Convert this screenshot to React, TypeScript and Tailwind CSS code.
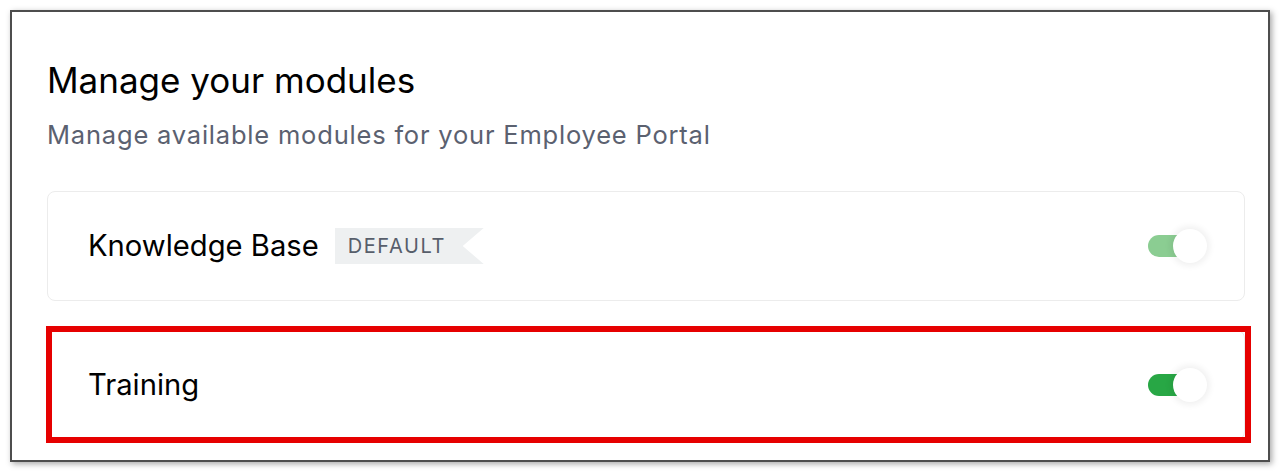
import React from "react";

function Toggle({ color }: { color: string }) {
  return (
    <div className="relative w-[62px] h-[34px] shrink-0">
      <div className={`absolute left-[3px] top-[6px] w-[43px] h-[22px] rounded-full ${color}`} />
      <div className="absolute right-0 top-0 w-[34px] h-[34px] rounded-full bg-white shadow-[0_0_6px_3px_rgba(0,0,0,0.06)]" />
    </div>
  );
}

export default function App() {
  return (
    <div className="w-[1280px] h-[472px] bg-white pt-[10px] pl-[10px]" style={{ fontFamily: "Inter, 'Noto Sans', sans-serif" }}>
      <div className="w-[1260px] h-[452px] bg-white border-2 border-[#4d4d4d] shadow-[2px_2px_6px_rgba(0,0,0,0.35)] pl-[35px] pt-[47px]">
        <h1 className="text-[35px] leading-[42px] text-black font-normal">Manage your modules</h1>
        <p className="mt-[19px] text-[25.5px] leading-[30px] text-[#5b6170] tracking-[0.8px]">Manage available modules for your Employee Portal</p>
        <div className="mt-[41px] w-[1198px] h-[110px] rounded-lg border border-[#ececec] flex items-center pl-[40px] pr-[37px]">
          <span className="text-[29.2px] text-black">Knowledge Base</span>
          <div className="ml-[16px] h-[36px] w-[149px] bg-[#eef0f1] flex items-center pl-[13px] [clip-path:polygon(0_0,100%_0,calc(100%-21px)_50%,100%_100%,0_100%)]">
            <span className="text-[20px] tracking-[1.6px] text-[#575e6b]">DEFAULT</span>
          </div>
          <div className="flex-1" />
          <Toggle color="bg-[#8bcd92]" />
        </div>
        <div className="relative mt-[29px] w-[1198px] h-[110px] rounded-lg border border-[#ececec] flex items-center pl-[40px] pr-[37px]">
          <span className="text-[29.2px] text-black">Training</span>
          <div className="flex-1" />
          <Toggle color="bg-[#28a745]" />
          <div className="absolute left-[-2px] top-[-5px] right-[-7px] bottom-[-4px] border-[6px] border-[#e60000] pointer-events-none" />
        </div>
      </div>
    </div>
  );
}
